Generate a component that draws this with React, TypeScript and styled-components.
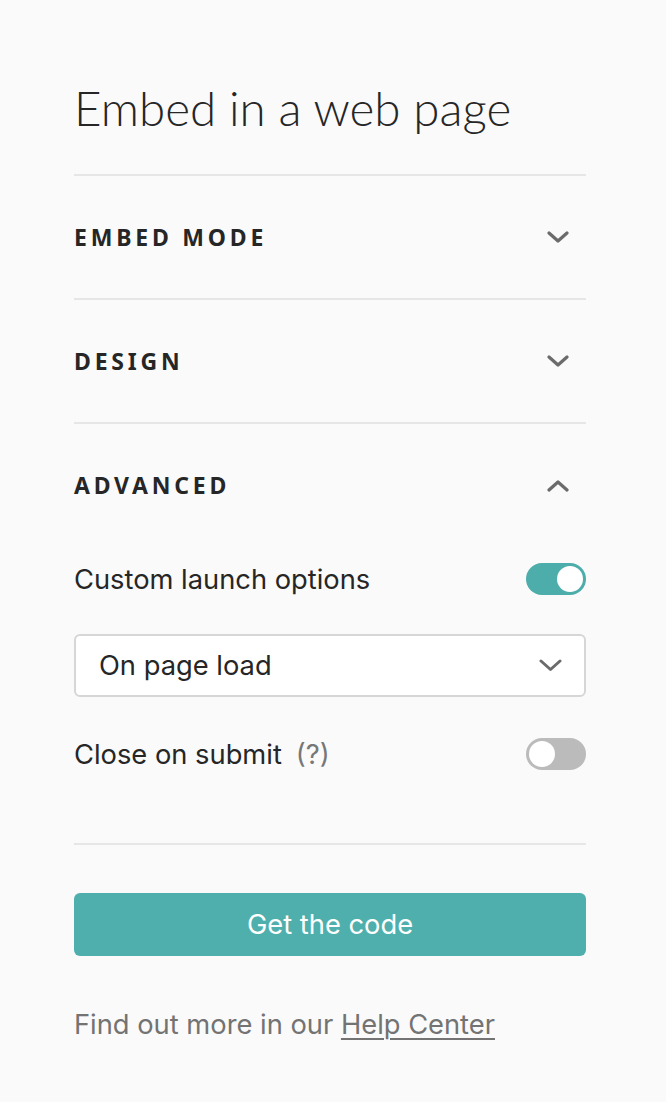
import React, { useState } from "react";
import styled, { createGlobalStyle } from "styled-components";

const Global = createGlobalStyle`
  html, body { margin: 0; padding: 0; background: #fafafa; }
  body { font-family: Inter, "Noto Sans", sans-serif; color: #262627; -webkit-font-smoothing: antialiased; }
`;

const Page = styled.div`
  width: 666px;
  padding: 82px 80px 60px 74px;
  min-height: 1102px;
  box-sizing: border-box;
  background: #fafafa;
`;

const Title = styled.h1`
  margin: 0;
  font-family: Lato, "Noto Sans", sans-serif;
  font-weight: 300;
  font-size: 47.5px;
  line-height: 52px;
  color: #262627;
  padding-bottom: 40px;
  border-bottom: 2px solid #e6e6e6;
  white-space: nowrap;
`;

const Section = styled.section`
  border-bottom: 2px solid #e6e6e6;
`;

const SectionHead = styled.div`
  display: flex;
  align-items: center;
  justify-content: space-between;
  height: 122px;
`;

const SectionTitle = styled.span`
  font-family: "Noto Sans", sans-serif;
  font-weight: 700;
  font-size: 23px;
  letter-spacing: 3.8px;
  color: #262627;
`;

const Chevron = styled.svg`
  width: 22px;
  height: 13px;
  margin-right: 17px;
`;

const Body = styled.div`
  display: flex;
  flex-direction: column;
  padding-bottom: 73px;
  margin-top: 17px;
`;

const Row = styled.div`
  display: flex;
  align-items: center;
  justify-content: space-between;
  height: 32px;
`;

const Label = styled.span`
  font-size: 27.3px;
  color: #262627;
`;

const Hint = styled.span`
  color: #777;
  margin-left: 14px;
`;

const Toggle = styled.button<{ $on: boolean }>`
  width: 60px;
  height: 32px;
  border-radius: 16px;
  border: none;
  padding: 3px;
  background: ${(p) => (p.$on ? "#4dadab" : "#bbbbbb")};
  display: flex;
  justify-content: ${(p) => (p.$on ? "flex-end" : "flex-start")};
  cursor: pointer;
  &::after {
    content: "";
    width: 26px;
    height: 26px;
    border-radius: 50%;
    background: #fff;
  }
`;

const Select = styled.div`
  margin: 39px 0 41px;
  height: 63px;
  box-sizing: border-box;
  border: 2px solid #d6d6d6;
  border-radius: 6px;
  background: #fff;
  display: flex;
  align-items: center;
  justify-content: space-between;
  padding: 0 22px 0 23px;
  font-size: 27.3px;
  color: #262627;
`;

const Button = styled.button`
  margin-top: 48px;
  width: 100%;
  height: 63px;
  border: none;
  border-radius: 6px;
  background: #4fafad;
  color: #fff;
  font-family: Inter, sans-serif;
  font-size: 27.3px;
  cursor: pointer;
`;

const Footer = styled.p`
  margin: 52px 0 0;
  font-size: 27.3px;
  color: #737373;
  white-space: nowrap;
  a { color: #737373; text-decoration: underline; text-underline-offset: 4px; text-decoration-thickness: 2px; }
`;

const ChevronIcon = ({ up }: { up?: boolean }) => (
  <Chevron viewBox="0 0 22 13" fill="none">
    <path
      d={up ? "M2 11 L11 3 L20 11" : "M2 2 L11 10 L20 2"}
      stroke="#6b6b6b"
      strokeWidth="3.2"
      strokeLinecap="round"
      strokeLinejoin="round"
    />
  </Chevron>
);

const SmallChevron = styled.svg`
  width: 23px;
  height: 13px;
`;

export default function App() {
  const [launch, setLaunch] = useState(true);
  const [close, setClose] = useState(false);
  return (
    <Page>
      <Global />
      <Title>Embed in a web page</Title>
      <Section>
        <SectionHead>
          <SectionTitle>EMBED MODE</SectionTitle>
          <ChevronIcon />
        </SectionHead>
      </Section>
      <Section>
        <SectionHead>
          <SectionTitle>DESIGN</SectionTitle>
          <ChevronIcon />
        </SectionHead>
      </Section>
      <Section>
        <SectionHead>
          <SectionTitle>ADVANCED</SectionTitle>
          <ChevronIcon up />
        </SectionHead>
        <Body>
          <Row>
            <Label>Custom launch options</Label>
            <Toggle $on={launch} onClick={() => setLaunch(!launch)} />
          </Row>
          <Select>
            <span>On page load</span>
            <SmallChevron viewBox="0 0 23 13" fill="none">
              <path d="M2 2 L11.5 10.5 L21 2" stroke="#6b6b6b" strokeWidth="3" strokeLinecap="round" strokeLinejoin="round" />
            </SmallChevron>
          </Select>
          <Row>
            <Label>
              Close on submit<Hint>(?)</Hint>
            </Label>
            <Toggle $on={close} onClick={() => setClose(!close)} />
          </Row>
        </Body>
      </Section>
      <Button>Get the code</Button>
      <Footer>
        Find out more in our <a href="#">Help Center</a>
      </Footer>
    </Page>
  );
}
